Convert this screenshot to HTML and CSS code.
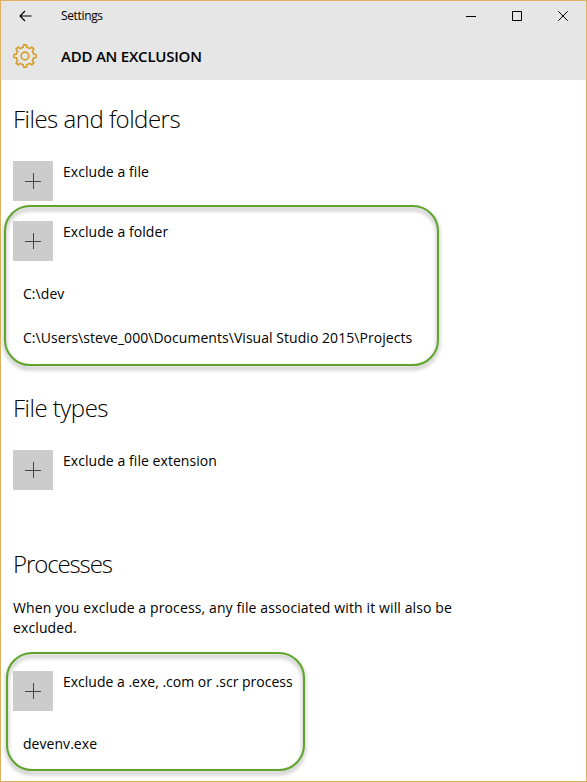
FILE: index.html
```html
<!DOCTYPE html>
<html lang="en">
<head>
<meta charset="utf-8">
<title>Settings</title>
<link rel="stylesheet" href="styles.css">
</head>
<body>
<div class="window">
  <header class="header">
    <div class="titlebar">
      <svg class="back" width="14" height="12" viewBox="0 0 14 12"><path d="M6 1 1 6l5 5M1 6h11.5"/></svg>
      <span class="app-name">Settings</span>
      <div class="controls">
        <svg width="11" height="11" viewBox="0 0 11 11"><path d="M0 5.5h10"/></svg>
        <svg width="11" height="11" viewBox="0 0 11 11"><path d="M.5.5h9v9h-9z"/></svg>
        <svg width="11" height="11" viewBox="0 0 11 11"><path d="m.3.3 9.4 9.4M9.7.3.3 9.7"/></svg>
      </div>
    </div>
    <div class="page-head">
      <svg class="gear" width="26" height="26" viewBox="-13.5 -13.5 27 27"><path d="M-1.9-9-1.5-11.5h3L1.9-9 5-7.7 7.1-9.2 9.2-7.1 7.7-5 9-1.9l2.5.4v3L9 1.9 7.7 5 9.2 7.1 7.1 9.2 5 7.7 1.9 9l-.4 2.5h-3L-1.9 9-5 7.7-7.1 9.2-9.2 7.1-7.7 5-9 1.9l-2.5-.4v-3L-9-1.9-7.7-5-9.2-7.1-7.1-9.2-5-7.7z"/><circle r="4"/></svg>
      <h1>ADD AN EXCLUSION</h1>
    </div>
  </header>
  <main class="content">
    <section class="files">
      <h2>Files and folders</h2>
      <div class="action"><button class="add" aria-label="Add"></button><span>Exclude a file</span></div>
      <div class="group">
        <div class="action"><button class="add" aria-label="Add"></button><span>Exclude a folder</span></div>
        <p class="entry entry-first">C:\dev</p>
        <p class="entry entry-next">C:\Users\steve_000\Documents\Visual Studio 2015\Projects</p>
        <div class="ring ring-folders"></div>
      </div>
    </section>
    <section class="types">
      <h2>File types</h2>
      <div class="action"><button class="add" aria-label="Add"></button><span>Exclude a file extension</span></div>
    </section>
    <section class="processes">
      <h2>Processes</h2>
      <p class="note">When you exclude a process, any file associated with it will also be<br>excluded.</p>
      <div class="group">
        <div class="action"><button class="add" aria-label="Add"></button><span>Exclude a .exe, .com or .scr process</span></div>
        <p class="entry entry-first">devenv.exe</p>
        <div class="ring ring-processes"></div>
      </div>
    </section>
  </main>
</div>
</body>
</html>
```
FILE: styles.css
```css
* { box-sizing: border-box; }
body, h1, h2, p { margin: 0; }
body { font: 14px/20px "Open Sans", "Noto Sans", sans-serif; color: #000; background: #fff; }
svg { fill: none; stroke: #000; stroke-width: 1; display: block; }
.window { width: 587px; height: 782px; border: 1px solid #dcb05c; overflow: hidden; }
.header { height: 79px; background: #e6e6e6; }
.titlebar { height: 30px; display: flex; align-items: center; padding: 0 17px 0 18px; }
.back { stroke-width: 1.2; }
.app-name { margin-left: 28px; font-size: 12px; letter-spacing: -.35px; }
.controls { margin-left: auto; display: flex; gap: 35px; }
.page-head { display: flex; align-items: center; padding-left: 11px; height: 50px; }
.gear { stroke: #d59f2b; stroke-width: 1.7; stroke-linejoin: round; }
h1 { margin-left: 23px; font-size: 15px; font-weight: 600; letter-spacing: -.22px; }
.content { padding: 23px 12px 0; }
h2 { font-size: 24px; line-height: 32px; font-weight: 300; color: #000; white-space: nowrap; letter-spacing: -.5px; }
.action { display: flex; gap: 10px; height: 40px; white-space: nowrap; letter-spacing: .06px; }
.action span { padding-top: 1px; }
.add { width: 40px; height: 40px; border: 0; padding: 0; background: linear-gradient(#444, #444) 12px 20px / 16px 1px no-repeat, linear-gradient(#444, #444) 20px 12px / 1px 16px no-repeat, #ccc; }
.files .action, .types .action { margin-top: 26px; }
.group { position: relative; }
.files .group .action { margin-top: 0; }
.files .group { margin-top: 20px; }
.entry { margin-left: 10px; white-space: nowrap; letter-spacing: .045px; }
.entry-first { margin-top: 23px; }
.entry-next { margin-top: 24px; }
.types { margin-top: 44px; }
.processes { margin-top: 58px; }
.processes h2 { letter-spacing: -1.1px; }
.note { margin-top: 18px; white-space: nowrap; letter-spacing: .12px; }
.processes .group { margin-top: 33px; }
.processes .action { letter-spacing: 0; }
.ring { position: absolute; border: 2px solid #5fa52c; border-radius: 26px; filter: drop-shadow(0 3px 2px rgba(0,0,0,.4)); pointer-events: none; }
.ring-folders { left: -9px; top: -16px; width: 435px; height: 161px; }
.ring-processes { left: -7px; top: -19px; width: 299px; height: 119px; }
```
